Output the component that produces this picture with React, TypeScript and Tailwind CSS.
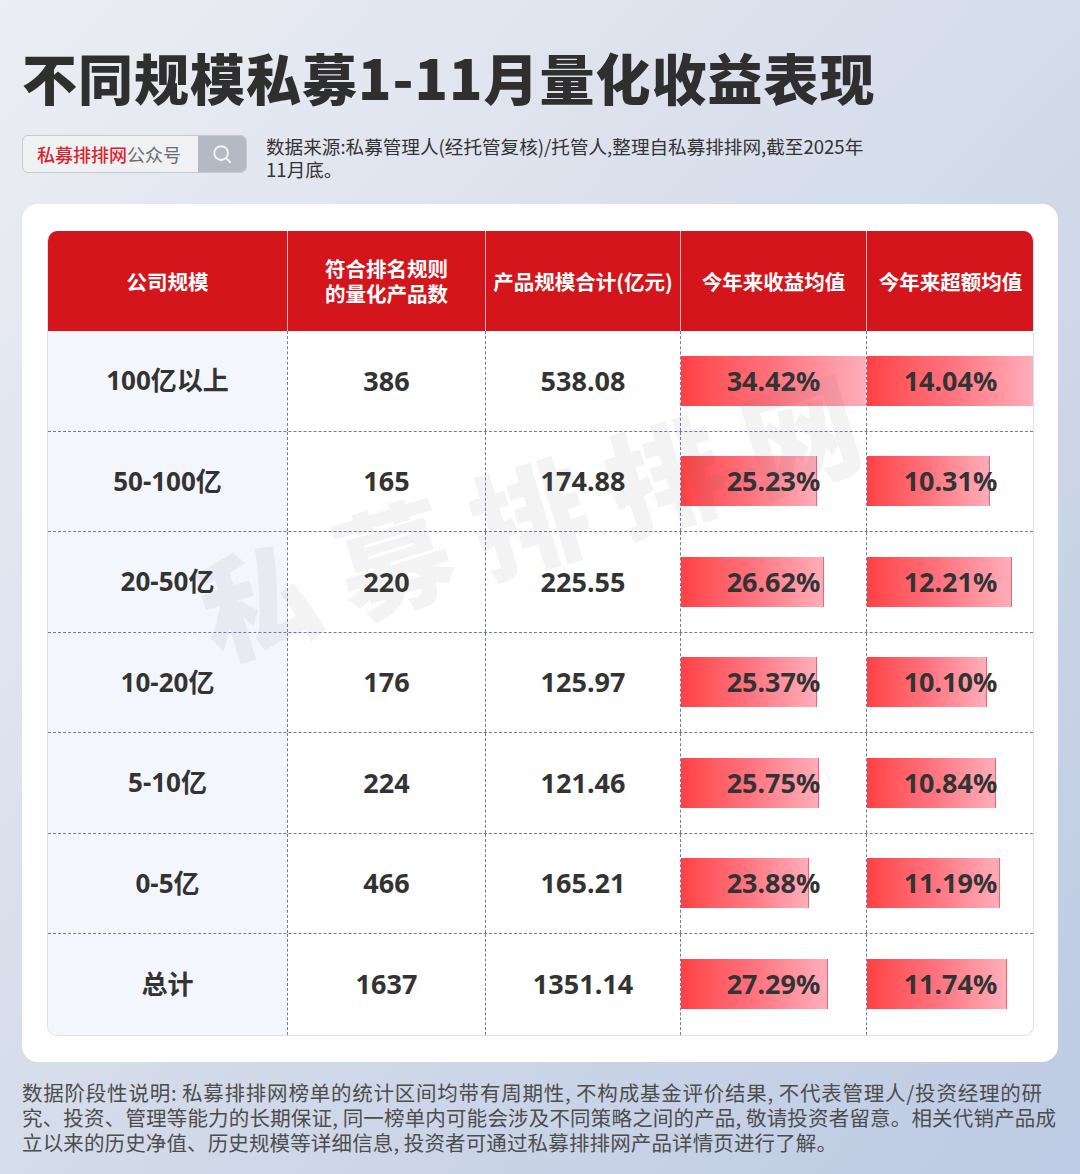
import React from "react";

const rows: [string, string, string, number, number][] = [
  ["100亿以上", "386", "538.08", 34.42, 14.04],
  ["50-100亿", "165", "174.88", 25.23, 10.31],
  ["20-50亿", "220", "225.55", 26.62, 12.21],
  ["10-20亿", "176", "125.97", 25.37, 10.1],
  ["5-10亿", "224", "121.46", 25.75, 10.84],
  ["0-5亿", "466", "165.21", 23.88, 11.19],
  ["总计", "1637", "1351.14", 27.29, 11.74],
];

const maxA = 34.42;
const maxB = 14.04;

const FONT = '"Noto Sans", "Noto Sans CJK SC", sans-serif';
const CJK = '"Noto Sans CJK SC", sans-serif';

function BarCell({ value, max }: { value: number; max: number }) {
  const full = value >= max;
  return (
    <div className="relative flex items-center justify-center border-l border-dashed border-[#7478a4]">
      <div
        className={`absolute left-0 top-1/2 -translate-y-1/2 h-[50px] bg-gradient-to-r from-[#ff4044] via-[#ff727e] to-[#ffadba] ${
          full ? "" : "border-r border-[#ff5f6e]"
        }`}
        style={{ width: `${(value / max) * 100}%` }}
      />
      <span className="relative text-[27px] font-bold text-[#333333]">{value.toFixed(2)}%</span>
    </div>
  );
}

export default function App() {
  return (
    <div
      className="relative w-[1080px] h-[1174px] overflow-hidden bg-gradient-to-br from-[#eceef3] via-[#d5dcea] to-[#bccae3]"
      style={{ fontFamily: FONT }}
    >
      <div className="px-[22px] pt-[49px]">
        <h1
          className="text-[55px] leading-none font-black text-[#2f2f2f] whitespace-nowrap tracking-[1px]"
          style={{ fontFamily: CJK }}
        >
          不同规模私募1-11月量化收益表现
        </h1>
      </div>

      <div className="flex items-start px-[22px] mt-[31px] h-[42px]">
        <div className="flex w-[225px] h-[38px] rounded-[6px] border border-[#c6cbd3] bg-[#eff1f5] overflow-hidden shrink-0">
          <div className="flex-1 flex items-center pl-[14px] text-[18px] leading-none" style={{ fontFamily: CJK }}>
            <span className="text-[#d8262c] font-medium">私募排排网</span>
            <span className="text-[#6a6a6a]">公众号</span>
          </div>
          <div className="w-[48px] bg-[#b4bac4] flex items-center justify-center">
            <svg width="22" height="22" viewBox="0 0 24 24" fill="none" stroke="#f4f5f7" strokeWidth="2" strokeLinecap="round">
              <circle cx="11" cy="11" r="7.5" />
              <path d="M16.5 16.5 L21 21" />
            </svg>
          </div>
        </div>
        <div
          className="ml-[19px] w-[620px] text-[18.6px] leading-[23px] text-[#333333] mt-[-1px]"
          style={{ fontFamily: CJK }}
        >
          数据来源:私募管理人(经托管复核)/托管人,整理自私募排排网,截至2025年
          <br />
          11月底。
        </div>
      </div>

      <div className="mx-[22px] mt-[27px] h-[858px] rounded-[16px] bg-white pt-[27px] pl-[25px] pr-[24px]">
        <div className="rounded-[10px] overflow-hidden border border-[#dfe2e8] border-t-0">
          <div
            className="grid grid-cols-[239px_198px_195px_186px_168px] h-[100px] bg-[#d4161c] text-white text-[20.5px] font-bold leading-[25px]"
            style={{ fontFamily: CJK }}
          >
            <div className="flex items-center justify-center">公司规模</div>
            <div className="flex items-center justify-center text-center border-l border-[#f3b6b8]">
              符合排名规则
              <br />
              的量化产品数
            </div>
            <div className="flex items-center justify-center border-l border-[#f3b6b8] whitespace-nowrap">
              产品规模合计(亿元)
            </div>
            <div className="flex items-center justify-center border-l border-[#f3b6b8]">今年来收益均值</div>
            <div className="flex items-center justify-center border-l border-[#f3b6b8]">今年来超额均值</div>
          </div>
          {rows.map((r, i) => (
            <div
              key={r[0]}
              className={`grid grid-cols-[239px_198px_195px_186px_168px] h-[100.5px] ${
                i < rows.length - 1 ? "border-b border-dashed border-[#7478a4]" : ""
              }`}
            >
              <div className="flex items-center justify-center bg-[#f3f6fc] text-[26px] font-bold text-[#333333]">
                {r[0]}
              </div>
              <div className="flex items-center justify-center border-l border-dashed border-[#7478a4] text-[27px] font-bold text-[#333333]">
                {r[1]}
              </div>
              <div className="flex items-center justify-center border-l border-dashed border-[#7478a4] text-[27px] font-bold text-[#333333]">
                {r[2]}
              </div>
              <BarCell value={r[3]} max={maxA} />
              <BarCell value={r[4]} max={maxB} />
            </div>
          ))}
        </div>
      </div>

      <div
        className="px-[22px] mt-[18px] text-[20.5px] leading-[25px] text-[#4d4d4d] whitespace-nowrap"
        style={{ fontFamily: CJK }}
      >
        <div className="w-[1020px] [text-align-last:justify]">
          数据阶段性说明: 私募排排网榜单的统计区间均带有周期性, 不构成基金评价结果, 不代表管理人/投资经理的研
        </div>
        <div className="w-[1034px] [text-align-last:justify]">
          究、投资、管理等能力的长期保证, 同一榜单内可能会涉及不同策略之间的产品, 敬请投资者留意。相关代销产品成
        </div>
        <div className="w-[815px] [text-align-last:justify]">
          立以来的历史净值、历史规模等详细信息, 投资者可通过私募排排网产品详情页进行了解。
        </div>
      </div>

      <div
        className="absolute left-[540px] top-[508px] -translate-x-1/2 -translate-y-1/2 -rotate-[17deg] whitespace-nowrap text-[116px] font-black leading-none tracking-[26px] text-[rgba(90,90,90,0.075)] pointer-events-none select-none"
        style={{ fontFamily: CJK }}
      >
        私募排排网
      </div>
    </div>
  );
}
